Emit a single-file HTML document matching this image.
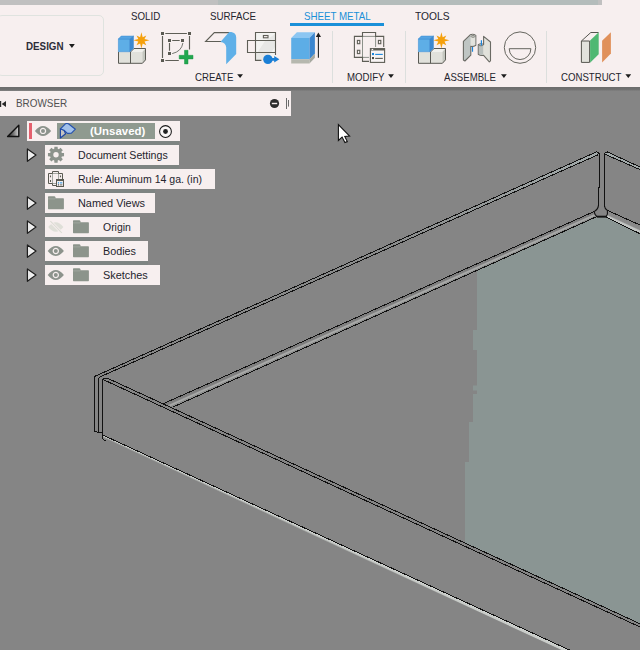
<!DOCTYPE html>
<html>
<head>
<meta charset="utf-8">
<title>Sheet Metal</title>
<style>
html,body{margin:0;padding:0;}
body{width:640px;height:650px;overflow:hidden;background:#858585;font-family:"Liberation Sans",sans-serif;font-size:11px;color:#24242d;position:relative;}
#canvas{position:absolute;left:0;top:0;width:640px;height:650px;}
#topstrip{position:absolute;left:0;top:0;width:602px;height:5px;background:#c0c0c0;}
#topstrip i{position:absolute;left:218px;top:0;width:380px;height:5px;background:#b4bcbb;}
#toolbar{position:absolute;left:0;top:0;width:640px;height:87px;background:#f7efef;}
#tbshadow{position:absolute;left:0;top:87px;width:640px;height:4px;background:linear-gradient(#6c6c6c,#707070 60%,#828282);}
.t{position:absolute;white-space:nowrap;line-height:12px;height:12px;transform-origin:0 50%;letter-spacing:0;}
.tab{top:10px;transform:scaleX(.885);}
.grp{top:71px;transform:scaleX(.875);}
.arr{position:absolute;width:5.8px;height:3.8px;background:#1c1c1c;clip-path:polygon(0 0,100% 0,50% 100%);}
.sep{position:absolute;top:31px;width:1px;height:52px;background:#dcdfdd;}
#design{position:absolute;left:-3px;top:15px;width:106.5px;height:61px;border:1px solid #dfe3df;border-radius:5px;box-sizing:border-box;}
#bhead{position:absolute;left:0;top:91px;width:291px;height:24.5px;background:#f7efef;}
.row{position:absolute;height:20px;background:#f7efef;}
.row .t{top:4px;}
</style>
</head>
<body>
<svg id="canvas" width="640" height="650" viewBox="0 0 640 650">
<!--MODEL-->
<defs>
<linearGradient id="bendL" gradientUnits="userSpaceOnUse" x1="380" y1="306.8" x2="382.8" y2="313.05">
<stop offset="0" stop-color="#7b7b7b"/><stop offset=".38" stop-color="#808080"/><stop offset=".52" stop-color="#a6a7a6"/><stop offset=".66" stop-color="#a9aaa9"/><stop offset=".78" stop-color="#8b8c8b"/><stop offset="1" stop-color="#8f9190"/>
</linearGradient>
<linearGradient id="bendR" gradientUnits="userSpaceOnUse" x1="624" y1="217.8" x2="620.9" y2="224.5">
<stop offset="0" stop-color="#868686"/><stop offset=".55" stop-color="#8b8b8b"/><stop offset=".72" stop-color="#c2c5c3"/><stop offset=".9" stop-color="#c4c7c5"/><stop offset="1" stop-color="#9aa09e"/>
</linearGradient>
<linearGradient id="bendB" gradientUnits="userSpaceOnUse" x1="300" y1="525.9" x2="298.6" y2="528.9">
<stop offset="0" stop-color="#cdd0cd"/><stop offset=".5" stop-color="#c6c9c6"/><stop offset=".8" stop-color="#9c9e9c"/><stop offset="1" stop-color="#858585"/>
</linearGradient>
<linearGradient id="topL" gradientUnits="userSpaceOnUse" x1="100" y1="0" x2="598" y2="0">
<stop offset="0" stop-color="#858585"/><stop offset=".6" stop-color="#8b8d8d"/><stop offset="1" stop-color="#a3abab"/>
</linearGradient>
</defs>
<!-- tinted floor -->
<polygon fill="#8a9593" points="477,270.8 597,217 606.25,217.2 640,233.75 640,623.75 465,543 465,462 469,462 469,422 473,422 473,394 477,394 477,390.5 473,390.5 473,385.5 477,385.5 477,350 473,350 473,330 477,330"/>
<!-- far wall top band -->
<polygon fill="url(#topL)" points="95.6,376 596.25,152 599,154.75 98.75,377.5"/>
<polygon fill="#a3abab" points="607.5,152 640,167 640,169.6 604.5,154"/>
<!-- bend bands -->
<polygon fill="url(#bendL)" points="163.75,403.5 594.2,211.3 597,216.6 173,407"/>
<polygon fill="url(#bendR)" points="607.4,210.4 640,225 640,233.75 606.25,217.2"/>
<!-- bottom bend highlight -->
<polygon fill="url(#bendB)" points="102.9,435 570.5,650.5 562.5,650.5 105.8,440.2 103.3,439"/>
<!-- relief hole -->
<path fill="#858585" stroke="#111" stroke-width="1.1" d="M598.4,205.6 Q598.2,209 594.2,211.6 Q594.6,215 597,216.6 L606.25,216.6 Q608,214 607.4,210.4 Q604.8,209 604.5,206"/>
<path stroke="#111" stroke-width="1.8" d="M597,216.6 L606.3,216.6" fill="none"/>
<g fill="none" stroke="#111" stroke-width="1" shape-rendering="crispEdges">
<!-- far wall top -->
<path d="M94.9,376.3 L95.6,376 L596.25,152 Q598.6,151.6 599.4,154.2"/>
<path d="M98.75,377.5 L598,154.75"/>
<!-- far right corner -->
<path d="M599.4,154.2 L599.4,187 L598.5,188 L598.4,206"/>
<path d="M604.5,206.6 L604.5,154 Q605,151.6 607.5,152 L640,167"/>
<path d="M604.5,154 L640,169.6"/>
<!-- bends -->
<path d="M163.75,403.5 L594,211.6"/>
<path d="M173,407 L596.9,216.5"/>
<path d="M607.4,210.4 L640,225"/>
<path d="M606.25,217.2 L640,233.75"/>
<!-- left end of far wall -->
<path d="M94.9,376.3 L94.9,431.5 L98.75,432.3 L102.75,432.5"/>
<path d="M98.75,377.5 L98.75,432.3"/>
<!-- front wall -->
<path d="M107,378 L105,378 L102.75,379.6 L102.75,438.5 Q103.5,440.5 106,441.2"/>
<path d="M103,379.5 L640,627"/>
<path d="M107,378 L640,623.75"/>
<path d="M102.75,435 L570.5,650.5"/>
</g>
<!--/MODEL-->
</svg>
<div id="toolbar">
<div id="topstrip"><i></i></div>
<div id="design"></div>
<div class="t" style="left:26px;top:40px;font-weight:bold;transform:scaleX(.89);color:#2c2c38">DESIGN</div>
<div class="arr" style="left:68.8px;top:43.8px;width:6.2px;height:4.2px"></div>
<div class="t tab" style="left:131px">SOLID</div>
<div class="t tab" style="left:210px">SURFACE</div>
<div class="t tab" style="left:303.5px;color:#1a8fd8">SHEET METAL</div>
<div class="t tab" style="left:415px;transform:scaleX(.93)">TOOLS</div>
<div style="position:absolute;left:290px;top:23px;width:94px;height:3px;background:#1a90d9"></div>
<div class="t grp" style="left:195.2px">CREATE</div><div class="arr" style="left:237.2px;top:74.2px"></div>
<div class="t grp" style="left:346.5px">MODIFY</div><div class="arr" style="left:388.1px;top:74.2px"></div>
<div class="t grp" style="left:444px">ASSEMBLE</div><div class="arr" style="left:501px;top:74.2px"></div>
<div class="t grp" style="left:560.5px">CONSTRUCT</div><div class="arr" style="left:625.4px;top:74.2px"></div>
<div class="sep" style="left:332px"></div>
<div class="sep" style="left:405px"></div>
<div class="sep" style="left:546px"></div>
<svg id="icons" style="position:absolute;left:0;top:0" width="640" height="87" viewBox="0 0 640 87">
<!--ICONS-->
<defs>
<g id="newcomp">
<polygon fill="#e1e1db" points="118.3,51.8 130.5,51.8 130.5,63.6 118.3,63.6"/>
<polygon fill="#e1e1db" points="130.5,52 142.4,52 142.4,63.6 130.5,63.6"/>
<polygon fill="#f1f1ed" points="130.5,52 134,48.3 145.5,48.3 142.4,52"/>
<polygon fill="#c4c7bf" points="142.4,52 145.5,48.3 145.5,59.9 142.4,63.6"/>
<path fill="none" stroke="#5a5a54" stroke-width="1" d="M118.5,51.8 L118.5,63.3 L142.4,63.3 L145.5,59.9 L145.5,48.5 L134,48.5 L130.5,52 L130.5,63.3"/>
<polygon fill="#5eaee6" stroke="#4292d6" stroke-width=".6" points="118.4,39 129.9,39 129.9,51.7 118.4,51.7"/>
<polygon fill="#56a4e2" stroke="#4292d6" stroke-width=".6" points="118.4,39 121.2,36.1 133.5,36.1 129.9,39"/>
<polygon fill="#3c88d0" stroke="#3c88d0" stroke-width=".5" points="129.9,39 133.5,36.1 133.5,48.6 129.9,51.7"/>
<polygon fill="#f5a00c" points="141.4,32.2 142.7,37.2 146.3,35.4 144.5,39.0 149.5,40.3 144.5,41.6 146.3,45.2 142.7,43.4 141.4,48.4 140.1,43.4 136.5,45.2 138.3,41.6 133.3,40.3 138.3,39.0 136.5,35.4 140.1,37.2"/>
</g>
</defs>
<use href="#newcomp"/>
<use href="#newcomp" transform="translate(300,0)"/>
<!-- create sketch -->
<g fill="none" stroke="#5e5e56" stroke-width="1.15">
<path d="M165.3,33.5 L186.9,33.5 M189.5,36.1 L189.5,49.6 M165.3,60.5 L178.8,60.5 M162.5,36.1 L162.5,57.9"/>
<path d="M172.2,40.5 L179.7,40.5 M169.5,43 L169.5,50.8"/>
<path stroke="#74776f" stroke-width="1" d="M172.2,53.6 Q181.5,51.5 182.9,43"/>
</g>
<g fill="#5a5a52">
<rect x="161" y="32" width="3" height="3"/><rect x="188" y="32" width="3" height="3"/><rect x="161" y="59" width="3" height="3"/>
<rect x="168" y="39" width="3" height="3"/><rect x="181" y="39" width="3" height="3"/><rect x="168" y="52" width="3" height="3"/>
</g>
<path fill="#22a74f" stroke="#1a9645" stroke-width=".5" d="M184.5,50.3 h3.5 v5 h5 v3.6 h-5 v5 h-3.5 v-5 h-5.3 v-3.6 h5.3z"/>
<!-- flange -->
<path fill="none" stroke="#5e5e56" stroke-width="1.1" stroke-linejoin="miter" d="M221,41.5 L205.6,41.5 L214.3,32.6 L230,32.6"/>
<path fill="#5fb0e8" d="M229.2,32.1 L231.3,31.9 Q236.2,32.8 236.2,37.5 L236.2,54 L226.2,64.2 L226.2,47.5 Q226,42.6 220.4,41.9 Z"/>
<!-- unfold -->
<rect x="255.5" y="32.5" width="20" height="27.9" fill="#f3f3f1"/>
<polygon fill="#e7e7e5" points="258,51.5 265,41 275,34 275,47 266,60 256,60 256,53"/>
<g fill="none" stroke="#5e5e56" stroke-width="1.1">
<path d="M261.4,60.4 L255.5,60.4 L255.5,32.5 L275.5,32.5 L275.5,55"/>
<path d="M255.5,40.5 L247.5,40.5 L247.5,52.5 L255.5,52.5"/>
<path d="M255.5,40.5 L275.5,40.5 M255.5,52.5 L275.5,52.5"/>
<rect x="263.4" y="35.5" width="4.6" height="2.3" fill="#f7efef"/>
</g>
<circle cx="267.9" cy="59.4" r="4.7" fill="#1a7fd6"/>
<path fill="#1a7fd6" d="M270,57.9 L274.2,57.9 L274.2,56 L279.4,59.3 L274.2,62.6 L274.2,60.7 L270,60.7Z"/>
<!-- extrude -->
<polygon fill="#5dade6" points="291.2,38 309.5,38 309.5,59.2 291.2,59.2"/>
<polygon fill="#8cc6f2" points="291.2,38 296.9,32.3 314.9,32.3 309.5,38"/>
<polygon fill="#3b86cf" points="309.5,38 314.9,32.3 314.9,53.6 309.5,59.2"/>
<polygon fill="#b6b8af" points="291.2,59.2 309.5,59.2 309.5,63.5 291.2,63.5"/>
<polygon fill="#a6a9a0" points="309.5,59.2 314.9,53.6 314.9,57.8 309.5,63.5"/>
<path stroke="#222" stroke-width="1.1" d="M318.4,35 L318.4,57.8" fill="none"/>
<polygon fill="#222" points="318.4,32.6 321,37 315.8,37"/>
<!-- rules -->
<g fill="none" stroke="#8d928b" stroke-width="1">
<path d="M362.5,36.4 L362.5,57.4 M375.6,36.4 L375.6,47 M362.5,36.4 L375.6,36.4 M362.5,57.4 L369,57.4"/>
</g>
<g fill="none" stroke="#5e5e56" stroke-width="1.1">
<path d="M369,61.4 L362.5,61.4 L362.5,57.4 L354.4,57.4 L354.4,36.4 L362.5,36.4 L362.5,32.5 L375.6,32.5 L375.6,36.4 L383.7,36.4 L383.7,47"/>
<rect x="357.4" y="40.4" width="2.4" height="3.3"/>
<rect x="357.4" y="50.3" width="2.4" height="3.3"/>
<rect x="378.4" y="40.4" width="2.4" height="3.3"/>
<rect x="370.4" y="48.6" width="14.2" height="13.8" fill="#f8f4f4"/>
<path d="M370.4,49.5 L384.6,49.5" stroke-width="2"/>
<path d="M375.2,58.4 L382.8,58.4"/>
<path d="M375.2,54.4 L382.8,54.4" stroke="#1a86dc"/>
</g>
<rect x="371.6" y="48.9" width="1.6" height="1.1" fill="#f8f4f4"/>
<rect x="372" y="53" width="2" height="2.1" fill="#1a86dc"/>
<rect x="372" y="57" width="2" height="2.1" fill="#4c4c46"/>
<!-- joint -->
<g stroke="#6a6a64" stroke-width="1.1" stroke-linejoin="round">
<path fill="#bfc5c3" d="M463.4,41.4 L470.2,34.8 Q473,33.6 475.8,35.4 L475.8,45.2 Q473.4,46.8 470.8,46.2 L470.8,55.2 L464.9,61 L463.4,60 Z"/>
<path fill="#e3e3dd" stroke="none" d="M470.6,35.2 Q473,34 475.3,35.6 L475.3,45 Q473.2,46.2 470.6,45.6 Z"/>
<ellipse cx="473" cy="36.4" rx="2" ry=".9" fill="#cfd2cc" stroke-width=".7"/>
<path fill="#e1e1db" d="M483.6,36.4 L490.5,42 L490.5,60.8 L489.3,61.8 L483.4,55.2 Q480.8,56 478.3,54.3 L478.3,44.8 Q480.8,43 483.6,44.4 Z"/>
<path fill="#b9bfbd" stroke="none" d="M478.8,45 Q480.8,43.6 483.2,44.8 L483.2,54.6 Q480.8,55.4 478.8,54 Z"/>
<path fill="none" stroke-width=".8" d="M478.5,45 Q480.9,46.8 483.5,45"/>
</g>
<path stroke="#1a86dc" stroke-width="1.2" d="M472.5,47 L472.5,51.8 M481.4,40.2 L481.4,45.4" fill="none"/>
<!-- as-built joint -->
<circle cx="520" cy="47.6" r="15.7" fill="none" stroke="#66665f" stroke-width="1"/>
<path d="M509.2,48.7 L530.9,48.7 A10.85,10.85 0 0 1 509.2,48.7 Z" fill="none" stroke="#66665f" stroke-width="1"/>
<!-- construct plane -->
<polygon fill="#e2e2dc" stroke="#55554f" stroke-width="1" points="581.4,41 589.6,41 589.6,62.4 581.4,62.4"/>
<path fill="none" stroke="#55554f" stroke-width="1" d="M581.4,41 L590.8,32.5 L598.5,32.5"/>
<polygon fill="#4fb872" points="590.1,40.6 598.7,32.3 598.7,54.2 590.1,62.8"/>
<polygon fill="#e0905a" points="602.1,40.8 610.9,32.3 610.9,53.6 602.1,62.6"/>
<!--/ICONS-->
</svg>
</div>
<div id="tbshadow"></div>
<div id="bhead">
<div class="t" style="left:16px;top:5.5px;color:#505050;transform:scaleX(.9)">BROWSER</div>
<svg style="position:absolute;left:0;top:0" width="291" height="25" viewBox="0 91 291 25">
<!--BHEAD-->
<path fill="#2a2a2a" d="M0,101 L1.2,101 L1.2,107 L0,107 Z M1.7,104 L6,100.9 L6,107 Z"/>
<circle cx="274.5" cy="103.5" r="4.6" fill="#2d2d2d"/>
<rect x="271.8" y="102.8" width="5.4" height="1.4" fill="#f7efef"/>
<path stroke="#6a6a6a" stroke-width="1" fill="none" d="M286.5,98 L286.5,109 M288.5,100 L288.5,106.6"/>
<!--/BHEAD-->
</svg>
</div>
<div style="position:absolute;left:45px;top:141px;width:134px;height:4px;background:#7e8482"></div><div style="position:absolute;left:45px;top:165px;width:134px;height:4px;background:#7e8482"></div><div style="position:absolute;left:45px;top:189px;width:110px;height:4px;background:#7e8482"></div><div style="position:absolute;left:45px;top:213px;width:95px;height:4px;background:#7e8482"></div><div style="position:absolute;left:45px;top:237px;width:95px;height:4px;background:#7e8482"></div><div style="position:absolute;left:45px;top:261px;width:103px;height:4px;background:#7e8482"></div>
<div class="row" style="left:27px;top:121px;width:153px"><div style="position:absolute;left:2px;top:2px;width:3px;height:16px;background:#e4606e"></div><div style="position:absolute;left:30px;top:2px;width:98px;height:16px;background:#8f9a90"></div><div class="t" style="left:63px;font-weight:bold;color:#fff;transform:scaleX(1.04)">(Unsaved)</div></div>
<div class="row" style="left:45px;top:145px;width:134px"><div class="t" style="left:33px;transform:scaleX(.965)">Document Settings</div></div>
<div class="row" style="left:45px;top:169px;width:170px"><div class="t" style="left:33px;transform:scaleX(.957)">Rule: Aluminum 14 ga. (in)</div></div>
<div class="row" style="left:45px;top:193px;width:110px"><div class="t" style="left:33px;transform:scaleX(.99)">Named Views</div></div>
<div class="row" style="left:45px;top:217px;width:95px"><div class="t" style="left:58px;transform:scaleX(.95)">Origin</div></div>
<div class="row" style="left:45px;top:241px;width:103px"><div class="t" style="left:58px;transform:scaleX(.98)">Bodies</div></div>
<div class="row" style="left:45px;top:265px;width:115px"><div class="t" style="left:58px;transform:scaleX(.99)">Sketches</div></div>
<svg id="treeicons" style="position:absolute;left:0;top:116px" width="300" height="175" viewBox="0 116 300 175">
<!--TREEICONS-->
<defs>
<linearGradient id="triG" x1="0" y1="0" x2="1" y2="0"><stop offset="0" stop-color="#222"/><stop offset=".5" stop-color="#707070"/><stop offset="1" stop-color="#d4d4d4"/></linearGradient>
<linearGradient id="triC" x1="0" y1="0" x2="1" y2="0"><stop offset="0" stop-color="#e4e4e4"/><stop offset="1" stop-color="#fafafa"/></linearGradient>
<g id="tri"><polygon points="27.4,-6.2 36,0 27.4,6.2" fill="url(#triC)" stroke="#1e1e1e" stroke-width="1.2" stroke-linejoin="round"/></g>
<g id="folder"><path fill="#8c948b" d="M0,0.6 Q0,0 0.6,0 L6.4,0 Q7,0 7.2,0.5 L7.8,2 L15.3,2 Q15.9,2 15.9,2.6 L15.9,12.3 Q15.9,12.9 15.3,12.9 L0.6,12.9 Q0,12.9 0,12.3 Z"/><path d="M0,2.6 L7,2.6 L7.6,2" stroke="#aab0a8" stroke-width=".7" fill="none"/></g>
<g id="eye"><path fill="#8c938c" d="M-8.1,0 Q-4,-5 0,-5 Q4,-5 8.1,0 Q4,5 0,5 Q-4,5 -8.1,0 Z"/><circle r="2.6" fill="none" stroke="#f7efef" stroke-width="1.2"/></g>
</defs>
<polygon points="18.8,125.3 18.8,136.5 7.6,136.5" fill="url(#triG)" stroke="#111" stroke-width="1.4" stroke-linejoin="round"/>
<use href="#tri" y="155.1"/>
<use href="#tri" y="203.1"/>
<use href="#tri" y="227.1"/>
<use href="#tri" y="251.1"/>
<use href="#tri" y="275.1"/>
<use href="#eye" x="43" y="130.9"/>
<path fill="#c4c4c2" stroke="#1b44a4" stroke-width="1.1" stroke-linejoin="round" d="M60.4,128.8 L60.4,138 L65.6,133.8 L64,130.2 Z"/>
<path fill="#a2c1ea" stroke="#2450ac" stroke-width="1.1" stroke-linejoin="round" d="M60.4,128.8 L65.4,123.8 Q66.8,123.2 68.4,123.8 L75.4,129.2 L71.2,133.3 L67.4,133.4 L64,130.2 Z"/>
<circle cx="165.5" cy="131.5" r="5.9" fill="#fbf7f7" stroke="#1a1a1a" stroke-width="1.05"/><circle cx="165.5" cy="131.5" r="2.4" fill="#222"/>
<path fill="#8c938c" fill-rule="evenodd" d="M54.26,148.85 L54.37,146.66 L57.63,146.66 L57.74,148.85 L58.90,149.33 L60.53,147.87 L62.83,150.17 L61.37,151.80 L61.85,152.96 L64.04,153.07 L64.04,156.33 L61.85,156.44 L61.37,157.60 L62.83,159.23 L60.53,161.53 L58.90,160.07 L57.74,160.55 L57.63,162.74 L54.37,162.74 L54.26,160.55 L53.10,160.07 L51.47,161.53 L49.17,159.23 L50.63,157.60 L50.15,156.44 L47.96,156.33 L47.96,153.07 L50.15,152.96 L50.63,151.80 L49.17,150.17 L51.47,147.87 L53.10,149.33 Z M53.30,154.70 a2.7,2.7 0 1,0 5.4,0 a2.7,2.7 0 1,0 -5.4,0 Z"/>
<g fill="none" stroke="#5a5a52" stroke-width="1">
<path stroke="#9a9f98" stroke-width=".9" d="M52.5,173.5 L52.5,183.5 M58.5,173.5 L58.5,179 M52.5,173.5 L58.5,173.5 M52.5,183.5 L56,183.5"/>
<path d="M56,185.5 L52.5,185.5 L52.5,183.5 L48.5,183.5 L48.5,173.5 L52.5,173.5 L52.5,171.5 L58.5,171.5 L58.5,173.5 L62.5,173.5 L62.5,179"/>
<path d="M50.5,175.4 L50.5,177.2 M50.5,180.1 L50.5,181.9 M60.5,175.4 L60.5,177.2" stroke-width="1.1"/>
<rect x="56.5" y="179.5" width="7" height="7" fill="#f8f4f4"/>
<path d="M56.5,180.3 L63.5,180.3" stroke-width="1.5"/>
<path d="M60,184.9 L62.4,184.9" stroke-width=".9"/>
<path d="M60,182.9 L62.4,182.9" stroke="#1a86dc" stroke-width="1"/>
</g>
<rect x="57.9" y="182.3" width="1.2" height="1.2" fill="#1a86dc"/>
<rect x="57.9" y="184.3" width="1.2" height="1.2" fill="#4c4c46"/>
<use href="#folder" x="48" y="196.3"/>
<use href="#folder" x="73" y="220.3"/>
<use href="#folder" x="73" y="244.3"/>
<use href="#folder" x="73" y="268.3"/>
<g opacity="1"><path fill="#dfdfd8" d="M48.2,227 Q52,222.2 55.8,222.2 Q59.6,222.2 63.4,227 Q59.6,231.8 55.8,231.8 Q52,231.8 48.2,227 Z"/><path d="M50,221 L62,233" stroke="#f7efef" stroke-width="2.6"/><path d="M50.4,221.2 L61.8,232.8" stroke="#dcdcd4" stroke-width="1.1"/></g>
<use href="#eye" x="55.8" y="251"/>
<use href="#eye" x="55.8" y="275"/>
<!--/TREEICONS-->
</svg>
<svg id="cursor" style="position:absolute;left:330px;top:118px" width="30" height="32" viewBox="330 118 30 32">
<path fill="#fff" stroke="#111" stroke-width="1.1" stroke-linejoin="miter" d="M338.4,124.6 L338.4,140.4 L342.1,137.1 L344.9,142.6 L347.3,141.6 L344.8,136.5 L349.6,136.1 Z"/>
</svg>
</body>
</html>
